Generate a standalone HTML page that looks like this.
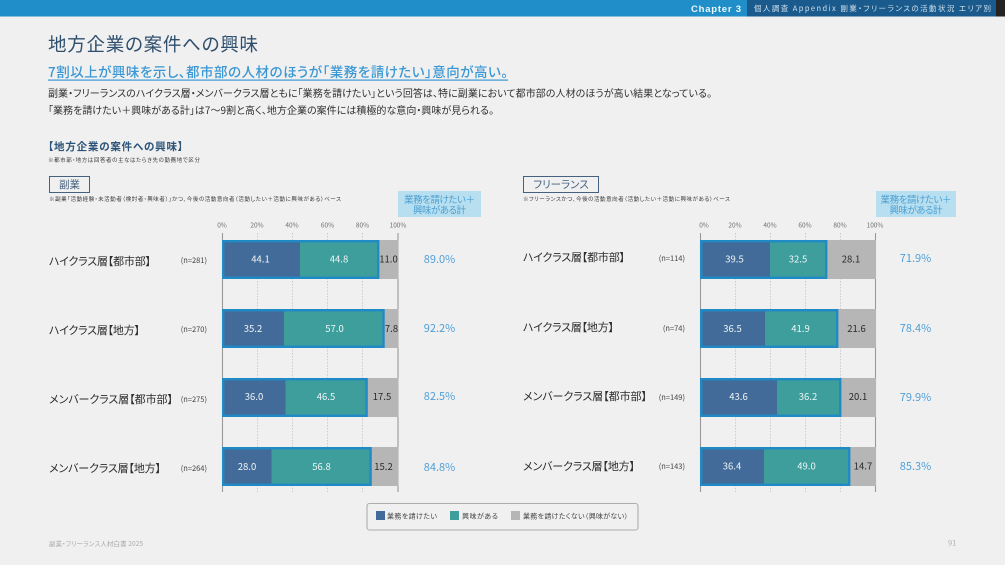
<!DOCTYPE html>
<html lang="ja"><head><meta charset="utf-8"><title>地方企業の案件への興味</title>
<style>
html,body{margin:0;padding:0;background:#f0f0f0;width:1005px;height:565px;overflow:hidden}
svg{display:block;filter:blur(.35px)}
text{font-family:"Liberation Sans","Noto Sans CJK JP",sans-serif;font-feature-settings:"palt";white-space:pre}
.j{font-family:"Noto Sans CJK JP",sans-serif}
.d{fill:#426b99}.t{fill:#3d9e9b}.g{fill:#b6b6b6}
.h{fill:none;stroke:#1f8ac6;stroke-width:2.4}
.w{fill:#f2f7f8;font-size:9.5px;text-anchor:middle;font-family:"Noto Sans CJK JP",sans-serif}
.k{fill:#2a2a2a;font-size:9.5px;text-anchor:middle;font-family:"Noto Sans CJK JP",sans-serif}
.c{fill:#2b2b2b;font-size:11px;font-family:"Noto Sans CJK JP",sans-serif}
.n{fill:#444;font-size:7.5px;text-anchor:end;font-family:"Noto Sans CJK JP",sans-serif}
.p{fill:#4f9fd6;font-size:11px;text-anchor:middle;font-family:"Noto Sans CJK JP",sans-serif}
.a{fill:#6f6f6f;font-size:6.5px;text-anchor:middle;font-family:"Noto Sans CJK JP",sans-serif}
.x{stroke:#999;stroke-width:1.1}
.v{stroke:#c4c4c4;stroke-width:.8;stroke-dasharray:1.5 1.5}
.s{fill:#3a3a3a;font-size:5.5px}
.l{fill:#444;font-size:7px}
</style></head><body>
<svg width="1005" height="565" viewBox="0 0 1005 565" xmlns="http://www.w3.org/2000/svg">
<rect width="1005" height="565" fill="#f0f0f0"/>
<rect width="747" height="16.5" fill="#1f8ec9"/>
<rect x="747" width="249" height="16.5" fill="#1a5a8c"/>
<rect x="996" width="9" height="16.5" fill="#232323"/>
<text x="691" y="12" fill="#eef6fb" font-size="9.5" font-weight="700" textLength="50">Chapter 3</text>
<text x="754" y="11" fill="#d0e0ec" font-size="7.5" textLength="237" class="j">個人調査 Appendix 副業・フリーランスの活動状況 エリア別</text>

<text x="48" y="51" fill="#2f4f6e" font-size="18.5" textLength="210" class="j">地方企業の案件への興味</text>
<text x="48" y="77" fill="#3a97d4" font-size="13.5" font-weight="500" textLength="460" class="j">7割以上が興味を示し、都市部の人材のほうが「業務を請けたい」意向が高い。</text>
<rect x="48" y="79.5" width="460" height="1.2" fill="#3a97d4"/>
<text x="48" y="97" fill="#2f2f2f" font-size="10" textLength="664" class="j">副業・フリーランスのハイクラス層・メンバークラス層ともに「業務を請けたい」という回答は、特に副業において都市部の人材のほうが高い結果となっている。</text>
<text x="48" y="114" fill="#2f2f2f" font-size="10" textLength="446" class="j">「業務を請けたい＋興味がある計」は7～9割と高く、地方企業の案件には積極的な意向・興味が見られる。</text>
<text x="48" y="150" fill="#2c5478" font-size="10.5" font-weight="700" textLength="135" class="j">【地方企業の案件への興味】</text>
<text x="48" y="162" class="s j" textLength="152">※都市部・地方は回答者の主なはたらき先の勤務地で区分</text>

<!-- boxes -->
<rect x="49.5" y="176.5" width="40" height="16" fill="none" stroke="#44617f" stroke-width="1"/>
<text x="69.5" y="188" text-anchor="middle" fill="#44617f" font-size="10.5" class="j">副業</text>
<rect x="523.5" y="176.5" width="75" height="16" fill="none" stroke="#44617f" stroke-width="1"/>
<text x="561" y="188" text-anchor="middle" fill="#44617f" font-size="10.5" class="j">フリーランス</text>
<text x="49" y="201" class="s j" textLength="292">※副業「活動経験・未活動者（検討者・興味者）」かつ、今後の活動意向者（活動したい＋活動に興味がある）ベース</text>
<text x="523" y="201" class="s j" textLength="207">※フリーランスかつ、今後の活動意向者（活動したい＋活動に興味がある）ベース</text>

<rect x="398" y="191" width="83" height="26" fill="#b8dff0"/>
<text x="439.5" y="203" text-anchor="middle" fill="#4a9fd2" font-size="9.5" class="j" textLength="71">業務を請けたい＋</text>
<text x="439.5" y="213.5" text-anchor="middle" fill="#4a9fd2" font-size="9.5" class="j" textLength="53">興味がある計</text>
<rect x="876" y="191" width="80" height="26" fill="#b8dff0"/>
<text x="916" y="203" text-anchor="middle" fill="#4a9fd2" font-size="9.5" class="j" textLength="71">業務を請けたい＋</text>
<text x="916" y="213.5" text-anchor="middle" fill="#4a9fd2" font-size="9.5" class="j" textLength="53">興味がある計</text>

<!-- axes left -->
<text class="a" x="222" y="227.5">0%</text><text class="a" x="257" y="227.5">20%</text><text class="a" x="292" y="227.5">40%</text><text class="a" x="327.5" y="227.5">60%</text><text class="a" x="362.5" y="227.5">80%</text><text class="a" x="398" y="227.5">100%</text>
<line class="v" x1="257.5" x2="257.5" y1="233" y2="492"/><line class="v" x1="292.5" x2="292.5" y1="233" y2="492"/><line class="v" x1="327.5" x2="327.5" y1="233" y2="492"/><line class="v" x1="362.5" x2="362.5" y1="233" y2="492"/>
<line class="x" x1="222.5" x2="222.5" y1="233" y2="492"/><line class="x" x1="398" x2="398" y1="233" y2="492"/>
<!-- axes right -->
<text class="a" x="704" y="227.5">0%</text><text class="a" x="735" y="227.5">20%</text><text class="a" x="770" y="227.5">40%</text><text class="a" x="805" y="227.5">60%</text><text class="a" x="840" y="227.5">80%</text><text class="a" x="875" y="227.5">100%</text>
<line class="v" x1="735.5" x2="735.5" y1="233" y2="492"/><line class="v" x1="770.5" x2="770.5" y1="233" y2="492"/><line class="v" x1="805.5" x2="805.5" y1="233" y2="492"/><line class="v" x1="840.5" x2="840.5" y1="233" y2="492"/>
<line class="x" x1="700.5" x2="700.5" y1="233" y2="492"/><line class="x" x1="875.5" x2="875.5" y1="233" y2="492"/>

<!-- left bars -->
<rect class="g" x="222" y="240" width="176.5" height="39"/><rect class="d" x="222" y="240" width="78" height="39"/><rect class="t" x="300" y="240" width="78.8" height="39"/><rect class="h" x="223.2" y="241.2" width="155" height="36.6"/>
<text class="w" x="260.5" y="262.5">44.1</text><text class="w" x="339" y="262.5">44.8</text><text class="k" x="388.5" y="262.5">11.0</text>
<rect class="g" x="222" y="309" width="176.5" height="39"/><rect class="d" x="222" y="309" width="62" height="39"/><rect class="t" x="284" y="309" width="100.3" height="39"/><rect class="h" x="223.2" y="310.2" width="160.3" height="36.6"/>
<text class="w" x="253" y="332">35.2</text><text class="w" x="334.5" y="332">57.0</text><text class="k" x="391.5" y="332">7.8</text>
<rect class="g" x="222" y="378" width="176.5" height="39"/><rect class="d" x="222" y="378" width="63.5" height="39"/><rect class="t" x="285.5" y="378" width="82" height="39"/><rect class="h" x="223.2" y="379.2" width="143.4" height="36.6"/>
<text class="w" x="254" y="400">36.0</text><text class="w" x="326" y="400">46.5</text><text class="k" x="382" y="400">17.5</text>
<rect class="g" x="222" y="447" width="176.5" height="39"/><rect class="d" x="222" y="447" width="49.5" height="39"/><rect class="t" x="271.5" y="447" width="100" height="39"/><rect class="h" x="223.2" y="448.2" width="147.4" height="36.6"/>
<text class="w" x="247" y="470">28.0</text><text class="w" x="321.5" y="470">56.8</text><text class="k" x="383.5" y="470">15.2</text>

<!-- right bars -->
<rect class="g" x="700" y="240" width="176" height="39"/><rect class="d" x="700" y="240" width="70" height="39"/><rect class="t" x="770" y="240" width="57" height="39"/><rect class="h" x="701.2" y="241.2" width="125" height="36.6"/>
<text class="w" x="734.5" y="262.5">39.5</text><text class="w" x="798" y="262.5">32.5</text><text class="k" x="851" y="262.5">28.1</text>
<rect class="g" x="700" y="309" width="176" height="39"/><rect class="d" x="700" y="309" width="65" height="39"/><rect class="t" x="765" y="309" width="73" height="39"/><rect class="h" x="701.2" y="310.2" width="136" height="36.6"/>
<text class="w" x="732.5" y="332">36.5</text><text class="w" x="800.5" y="332">41.9</text><text class="k" x="856.5" y="332">21.6</text>
<rect class="g" x="700" y="378" width="176" height="39"/><rect class="d" x="700" y="378" width="77" height="39"/><rect class="t" x="777" y="378" width="64" height="39"/><rect class="h" x="701.2" y="379.2" width="139" height="36.6"/>
<text class="w" x="738.5" y="400">43.6</text><text class="w" x="808" y="400">36.2</text><text class="k" x="858" y="400">20.1</text>
<rect class="g" x="700" y="447" width="176" height="39"/><rect class="d" x="700" y="447" width="64" height="39"/><rect class="t" x="764" y="447" width="86" height="39"/><rect class="h" x="701.2" y="448.2" width="148" height="36.6"/>
<text class="w" x="732" y="469.5">36.4</text><text class="w" x="806.5" y="469.5">49.0</text><text class="k" x="863" y="469.5">14.7</text>

<!-- labels left -->
<text class="c" x="49" y="265" textLength="102">ハイクラス層【都市部】</text><text class="n" x="207" y="263">(n=281)</text><text class="p" x="439.5" y="263">89.0%</text>
<text class="c" x="49" y="334" textLength="91">ハイクラス層【地方】</text><text class="n" x="207" y="332">(n=270)</text><text class="p" x="439.5" y="332">92.2%</text>
<text class="c" x="49" y="403" textLength="124">メンバークラス層【都市部】</text><text class="n" x="207" y="402">(n=275)</text><text class="p" x="439.5" y="400">82.5%</text>
<text class="c" x="49" y="472" textLength="112">メンバークラス層【地方】</text><text class="n" x="207" y="471">(n=264)</text><text class="p" x="439.5" y="471">84.8%</text>
<!-- labels right -->
<text class="c" x="523" y="261" textLength="102">ハイクラス層【都市部】</text><text class="n" x="685" y="261">(n=114)</text><text class="p" x="915.5" y="262">71.9%</text>
<text class="c" x="523" y="331" textLength="91">ハイクラス層【地方】</text><text class="n" x="685" y="331">(n=74)</text><text class="p" x="915.5" y="332">78.4%</text>
<text class="c" x="523" y="400" textLength="124">メンバークラス層【都市部】</text><text class="n" x="685" y="400">(n=149)</text><text class="p" x="915.5" y="401">79.9%</text>
<text class="c" x="523" y="470" textLength="112">メンバークラス層【地方】</text><text class="n" x="685" y="469">(n=143)</text><text class="p" x="915.5" y="470">85.3%</text>

<!-- legend -->
<rect x="367" y="503.5" width="271" height="26.5" rx="2.5" fill="none" stroke="#adadad" stroke-width="1.1"/>
<rect x="376" y="511" width="9" height="9" fill="#426b99"/><text class="l j" x="387" y="518.5" textLength="50">業務を請けたい</text>
<rect x="450" y="511" width="9" height="9" fill="#3d9e9b"/><text class="l j" x="462" y="518.5" textLength="36">興味がある</text>
<rect x="511" y="511" width="9" height="9" fill="#b6b6b6"/><text class="l j" x="523" y="518.5" textLength="105">業務を請けたくない（興味がない）</text>

<text x="49" y="546" fill="#ababab" font-size="6.5" class="j" textLength="94">副業・フリーランス人材白書 2025</text>
<text x="948" y="545.5" fill="#b0b0b0" font-size="7.5" class="j">91</text>
</svg>
</body></html>
